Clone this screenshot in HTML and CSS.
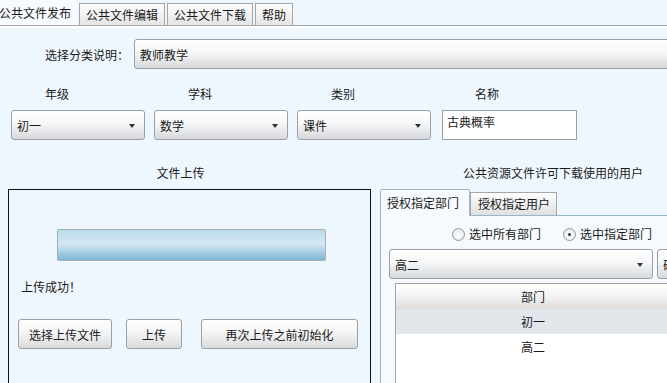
FILE: index.html
```html
<!DOCTYPE html>
<html>
<head>
  <meta charset="UTF-8">
  <title>公共文件发布</title>
  <link rel="stylesheet" href="styles.css">
</head>
<body>
  <div class="tabbar">
    <div class="tab active">公共文件发布</div>
    <div class="tab">公共文件编辑</div>
    <div class="tab">公共文件下载</div>
    <div class="tab">帮助</div>
  </div>

  <div class="category-row">
    <span class="category-label">选择分类说明：</span>
    <div class="combo category-combo"><span>教师教学</span></div>
  </div>

  <div class="fields">
    <div class="field">
      <div class="field-label">年级</div>
      <div class="combo"><span>初一</span><i class="arrow"></i></div>
    </div>
    <div class="field">
      <div class="field-label">学科</div>
      <div class="combo"><span>数学</span><i class="arrow"></i></div>
    </div>
    <div class="field">
      <div class="field-label">类别</div>
      <div class="combo"><span>课件</span><i class="arrow"></i></div>
    </div>
    <div class="field field-name">
      <div class="field-label">名称</div>
      <div class="textbox">古典概率</div>
    </div>
  </div>

  <div class="lower">
    <!-- 左侧：文件上传 -->
    <div class="upload-col">
      <div class="section-title upload-title">文件上传</div>
      <div class="upload-box">
        <div class="progress"></div>
        <div class="status">上传成功！</div>
        <div class="upload-actions">
          <button class="btn btn-choose">选择上传文件</button>
          <button class="btn btn-upload">上传</button>
          <button class="btn btn-reset">再次上传之前初始化</button>
        </div>
      </div>
    </div>

    <!-- 右侧：授权 -->
    <div class="auth-col">
      <div class="section-title">公共资源文件许可下载使用的用户</div>
      <div class="auth-tabs">
        <div class="auth-tab active">授权指定部门</div>
        <div class="auth-tab">授权指定用户</div>
      </div>
      <div class="auth-panel">
        <div class="radio-row">
          <label class="radio"><i class="radio-dot"></i>选中所有部门</label>
          <label class="radio checked"><i class="radio-dot"></i>选中指定部门</label>
        </div>
        <div class="dept-row">
          <div class="combo dept-combo"><span>高二</span><i class="arrow"></i></div>
          <button class="btn btn-ok">确定</button>
        </div>
        <div class="dept-table">
          <div class="dept-head">部门</div>
          <div class="dept-cell selected">初一</div>
          <div class="dept-cell">高二</div>
        </div>
      </div>
    </div>
  </div>
</body>
</html>
```

FILE: styles.css
```css
html, body {
  margin: 0;
  padding: 0;
  width: 667px;
  height: 383px;
  overflow: hidden;
  background-color: #eff7fe;
  font-family: "Noto Sans CJK SC", "Microsoft YaHei", sans-serif;
  font-size: 12px;
  color: #1a1a1a;
}

/* 顶部选项卡 */
.tabbar {
  display: flex;
  align-items: flex-end;
  height: 25px;
  border-bottom: 1px solid #a3a9b0;
  box-shadow: 0 2px 0 #ffffff;
}

.tab {
  height: 21px;
  line-height: 21px;
  padding: 0 6px;
  margin-left: 2px;
  border: 1px solid #a6a6a6;
  border-bottom: none;
  background: linear-gradient(#fefefe, #e4e4e4);
}

.tab.active {
  margin-left: -1px;
  width: 78px;
  padding: 0;
  height: 25px;
  line-height: 25px;
  border: none;
  background-color: #f7fbff;
  background-image: none;
}

/* 分类说明 */
.category-row {
  display: flex;
  align-items: center;
  margin-top: 13px;
  padding-left: 45px;
  overflow: hidden;
}

.category-label {
  width: 89px;
  flex-shrink: 0;
  white-space: nowrap;
}

.combo {
  position: relative;
  display: flex;
  align-items: center;
  box-sizing: border-box;
  height: 30px;
  padding-left: 5px;
  border: 1px solid #9aa0a8;
  border-radius: 3px;
  background: linear-gradient(#ffffff, #f6f7f8 45%, #d6d8db);
}

.category-combo {
  width: 560px;
  flex-shrink: 0;
}

.arrow {
  position: absolute;
  right: 9px;
  top: 13px;
  width: 0;
  height: 0;
  border-left: 3px solid transparent;
  border-right: 3px solid transparent;
  border-top: 4px solid #333;
}

/* 年级 学科 类别 名称 */
.fields {
  display: flex;
  margin-top: 17px;
  padding-left: 11px;
  gap: 9px;
}

.field {
  width: 134px;
}

.field-name {
  margin-left: 2px;
  width: 135px;
}

.field-label {
  height: 16px;
  line-height: 16px;
  padding-left: 34px;
  margin-bottom: 8px;
}

.field-name .field-label {
  padding-left: 33px;
}

.textbox {
  box-sizing: border-box;
  height: 30px;
  padding: 3px 4px;
  border: 1px solid #9aa0a8;
  background-color: #ffffff;
  line-height: 16px;
}

/* 下半部分 */
.lower {
  display: flex;
  margin-top: 25px;
  overflow: hidden;
}

.section-title {
  height: 16px;
  line-height: 16px;
  text-align: center;
  margin-bottom: 8px;
  white-space: nowrap;
}

.upload-title {
  padding-right: 18px;
}

.upload-col {
  margin-left: 8px;
  width: 363px;
  flex-shrink: 0;
}

.upload-box {
  box-sizing: border-box;
  height: 210px;
  border: 1px solid #111;
  padding: 39px 0 0 0;
}

.progress {
  box-sizing: border-box;
  width: 269px;
  height: 32px;
  margin-left: 48px;
  border: 1px solid #a7b0b8;
  border-radius: 2px;
  background: linear-gradient(#b9dbec, #d3e7f1 45%, #bedbea 60%, #7db7d6);
}

.status {
  margin: 18px 0 0 12px;
  height: 16px;
  line-height: 16px;
}

.upload-actions {
  display: flex;
  margin: 24px 0 0 9px;
}

.btn {
  box-sizing: border-box;
  height: 30px;
  padding: 0;
  font-family: inherit;
  font-size: 12px;
  color: #1a1a1a;
  border: 1px solid #9aa0a8;
  border-radius: 3px;
  background: linear-gradient(#ffffff, #f4f5f6 45%, #d8dadc);
  white-space: nowrap;
}

.btn-choose { width: 94px; }
.btn-upload { width: 56px; margin-left: 14px; }
.btn-reset { width: 157px; margin-left: 19px; }

.auth-col {
  margin-left: 9px;
  width: 346px;
  flex-shrink: 0;
}

.auth-tabs {
  display: flex;
  align-items: flex-end;
  height: 26px;
}

.auth-tab {
  box-sizing: border-box;
  width: 87px;
  height: 23px;
  line-height: 21px;
  padding-left: 7px;
  border: 1px solid #a6a6a6;
  border-bottom: none;
  background: linear-gradient(#fefefe, #dedfe0);
}

.auth-tab.active {
  width: 90px;
  height: 27px;
  line-height: 25px;
  margin-bottom: -1px;
  padding-left: 6px;
  border-color: #98b4c8;
  border-radius: 2px 2px 0 0;
  background: #f6fafe;
  position: relative;
  z-index: 1;
}

.auth-panel {
  border-top: 1px solid #98b4c8;
  border-left: 1px solid #98b4c8;
  background-color: #f6fafe;
  height: 200px;
  padding: 10px 0 0 8px;
}

.radio-row {
  display: flex;
  height: 16px;
  line-height: 16px;
  padding-left: 63px;
}

.radio {
  display: flex;
  align-items: center;
  margin-right: 22px;
}

.radio-dot {
  position: relative;
  box-sizing: border-box;
  width: 13px;
  height: 13px;
  margin-right: 4px;
  border: 1px solid #8e98a2;
  border-radius: 50%;
  background: radial-gradient(circle at 50% 60%, #ffffff, #dde2e7);
}

.radio.checked .radio-dot::after {
  content: "";
  position: absolute;
  left: 4px;
  top: 4px;
  width: 3px;
  height: 3px;
  border-radius: 50%;
  background-color: #333;
}

.dept-row {
  display: flex;
  margin-top: 7px;
}

.dept-combo {
  width: 264px;
  flex-shrink: 0;
}

.btn-ok {
  width: 60px;
  flex-shrink: 0;
  margin-left: 4px;
  text-align: left;
  padding-left: 5px;
}

.dept-table {
  width: 274px;
  height: 110px;
  margin: 4px 0 0 6px;
  border: 1px solid #a3a3a3;
  background-color: #ffffff;
}

.dept-head,
.dept-cell {
  height: 25px;
  line-height: 25px;
  text-align: center;
}

.dept-head {
  background: linear-gradient(#ffffff, #f2f2f2 50%, #dcdcdc);
}

.dept-cell.selected {
  background-color: #e2e7ec;
}
```
